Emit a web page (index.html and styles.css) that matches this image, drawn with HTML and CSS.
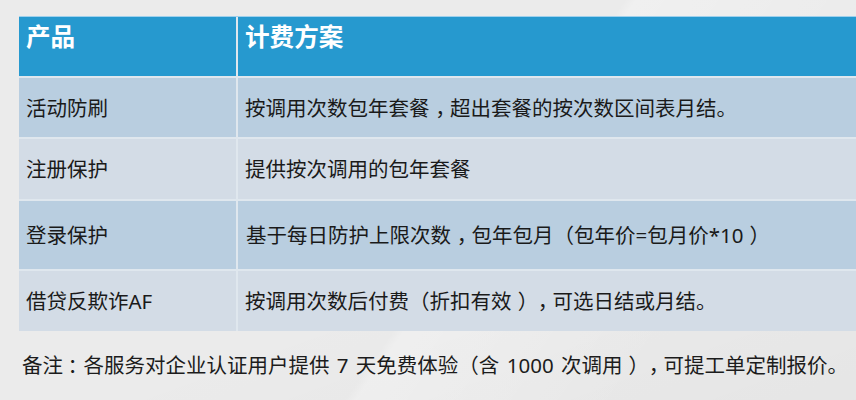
FILE: index.html
```html
<!DOCTYPE html>
<html lang="zh-CN">
<head>
<meta charset="utf-8">
<title>计费方案</title>
<link rel="stylesheet" href="styles.css">
</head>
<body>
<div class="page">
  <div class="pricing">
    <div class="cell head">产品</div>
    <div class="cell head">计费方案</div>

    <div class="cell odd">活动防刷</div>
    <div class="cell odd">按调用次数包年套餐<span class="pc">，</span>超出套餐的按次数区间表月结。</div>

    <div class="cell even">注册保护</div>
    <div class="cell even">提供按次调用的包年套餐</div>

    <div class="cell odd">登录保护</div>
    <div class="cell odd shift">基于每日防护上限次数<span class="pc">，</span>包年包月（包年价=包月价*10<span class="pr">）</span></div>

    <div class="cell even">借贷反欺诈AF</div>
    <div class="cell even">按调用次数后付费（折扣有效<span class="pr">）</span><span class="pc">，</span>可选日结或月结。</div>
  </div>
  <p class="note">备注<span class="pk">：</span>各服务对企业认证用户提供 7 天免费体验（含 1000 次调用<span class="pr">）</span><span class="pc">，</span>可提工单定制报价。</p>
</div>
</body>
</html>
```

FILE: styles.css
```css
html, body {
  margin: 0;
  padding: 0;
}

body {
  width: 856px;
  height: 400px;
  overflow: hidden;
  background-color: #ebebeb;
  background-image:
    linear-gradient(125deg, rgba(255,255,255,0) 0%, rgba(255,255,255,0) 55%, rgba(255,255,255,0.25) 56%, rgba(255,255,255,0) 80%),
    linear-gradient(160deg, rgba(0,0,0,0) 60%, rgba(0,0,0,0.025) 100%);
  font-family: "Noto Sans", "Noto Sans CJK SC", "Liberation Sans", sans-serif;
  color: #1a1a1a;
  text-spacing-trim: space-all;
}

.page {
  padding: 16px 0 0 19px;
}

.pricing {
  display: grid;
  grid-template-columns: 217px 1fr;
  grid-template-rows: 59px 59px 60px 68px 60px;
  gap: 2px;
  background: #dfe7ee;
  border-top: 1px solid #9fd0ec;
}

.cell {
  display: flex;
  align-items: center;
  padding: 0 7px;
  font-size: 20.5px;
  line-height: 28px;
  white-space: nowrap;
}

.cell.head {
  align-items: flex-start;
  padding-top: 5px;
  background: #2699cf;
  color: #ffffff;
  font-size: 24.6px;
  font-weight: 700;
  line-height: 30px;
}

.cell.odd {
  background: #b9cee0;
}

.cell.even {
  background: #d3dce6;
}

.cell.shift {
  padding-left: 8px;
}

/* full-width punctuation centred in its em box, as in the source font:
   half-width glyph plus padding keeps the 1em advance */
.pc,
.pr,
.pk {
  font-feature-settings: "halt" 1;
}

.pc {
  padding: 0 0.22em 0 0.28em;
}

.pr {
  padding: 0 0.2em 0 0.3em;
}

.pk {
  padding: 0 0.28em 0 0.22em;
}

.note {
  margin: 19px 0 0 3px;
  font-size: 20.5px;
  line-height: 30px;
  word-spacing: 2px;
  color: #1c1c1c;
  white-space: nowrap;
}
```
